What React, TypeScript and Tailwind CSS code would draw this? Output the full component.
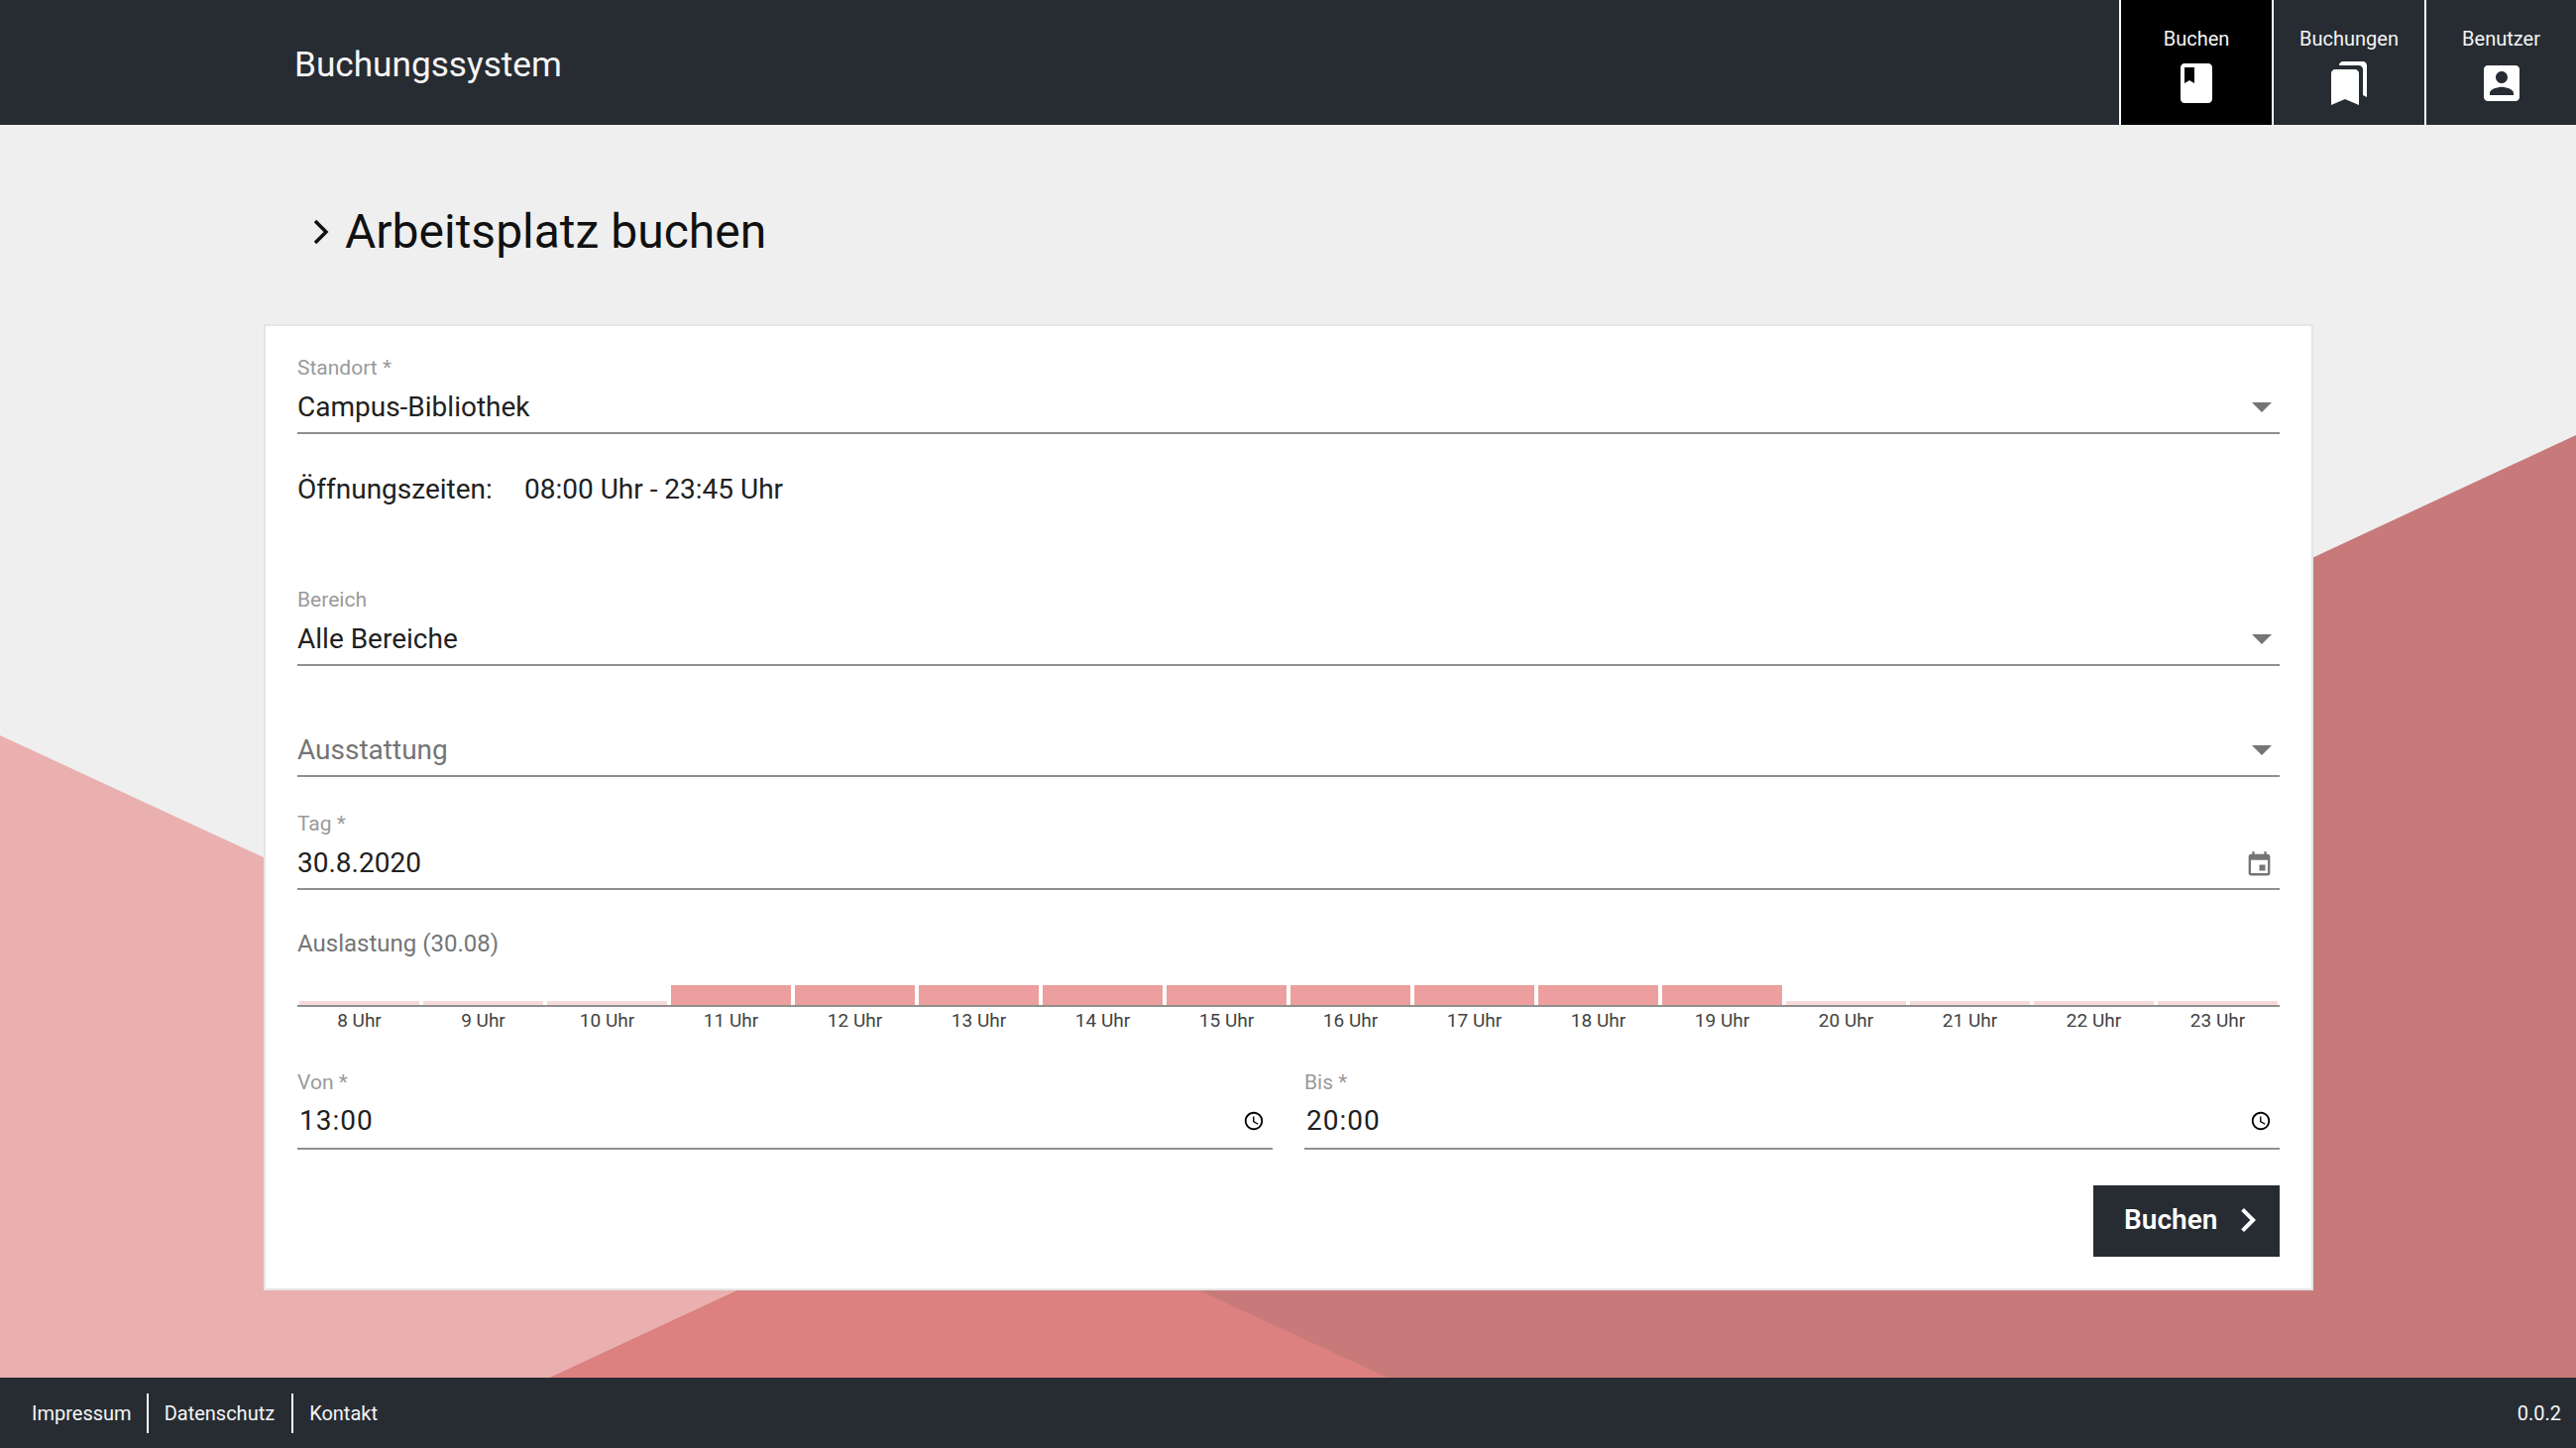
const hours = [8, 9, 10, 11, 12, 13, 14, 15, 16, 17, 18, 19, 20, 21, 22, 23]

function MuiIcon({ d, className }: { d: string; className: string }) {
  return (
    <svg viewBox="0 0 24 24" fill="currentColor" className={className}>
      <path d={d} />
    </svg>
  )
}

const bookIcon = "M18 2H6c-1.1 0-2 .9-2 2v16c0 1.1.9 2 2 2h12c1.1 0 2-.9 2-2V4c0-1.1-.9-2-2-2zM6 4h5v8l-2.5-1.5L6 12V4z"
const bookmarksIcon = "M19 18l2 1V3c0-1.1-.9-2-2-2H8.99C7.89 1 7 1.9 7 3h10c1.1 0 2 .9 2 2v13zM15 5H5c-1.1 0-2 .9-2 2v16l7-3 7 3V7c0-1.1-.9-2-2-2z"
const accountIcon = "M3 5v14c0 1.1.89 2 2 2h14c1.1 0 2-.9 2-2V5c0-1.1-.9-2-2-2H5c-1.11 0-2 .9-2 2zm12 4c0 1.66-1.34 3-3 3s-3-1.34-3-3 1.34-3 3-3 3 1.34 3 3zm-9 8c0-2 4-3.1 6-3.1s6 1.1 6 3.1v1H6v-1z"
const eventIcon = "M17 12h-5v5h5v-5zM16 1v2H8V1H6v2H5c-1.11 0-1.99.9-1.99 2L3 19c0 1.1.89 2 2 2h14c1.1 0 2-.9 2-2V5c0-1.1-.9-2-2-2h-1V1h-2zm3 18H5V8h14v11z"
const clockIcon = "M11.99 2C6.47 2 2 6.48 2 12s4.47 10 9.99 10C17.52 22 22 17.52 22 12S17.52 2 11.99 2zM12 20c-4.42 0-8-3.58-8-8s3.58-8 8-8 8 3.58 8 8-3.58 8-8 8zm.5-13H11v6l5.25 3.15.75-1.23-4.5-2.67z"
const nextIcon = "M10 6L8.59 7.41 13.17 12l-4.58 4.59L10 18l6-6z"

function NavItem({ label, icon, width, active }: { label: string; icon: string; width: string; active?: boolean }) {
  return (
    <div className={`${active ? 'bg-black' : ''} ${width} h-full border-l-2 border-white box-content flex flex-col items-center text-[#f5f5f5]`}>
      <span className="mt-[25px] h-[28px] leading-[28px] text-[20px]">{label}</span>
      <MuiIcon d={icon} className="w-[48px] h-[48px] mt-[7px] text-white" />
    </div>
  )
}

function Arrow() {
  return (
    <svg viewBox="0 0 20 10" className="w-[20px] h-[10px] fill-[#757575]">
      <path d="M0 0h20L10 10z" />
    </svg>
  )
}

function Label({ text }: { text: string }) {
  return <div className="h-[24px] leading-[26px] text-[21px] text-[#9a9a9a]">{text}</div>
}

function Underlined({ value, muted, time, h = 'h-[54px]', children }: { value: string; muted?: boolean; time?: boolean; h?: string; children: React.ReactNode }) {
  return (
    <div className={`${h} box-content border-b-2 border-[#8f8f8f] flex items-center justify-between`}>
      <span className={`${muted ? 'text-[#757575]' : 'text-[#212121]'} ${time ? 'pl-[2px] tracking-[1px]' : 'pt-[3px]'} text-[28px] leading-[36px]`}>{value}</span>
      {children}
    </div>
  )
}

function SelectArrow() {
  return (
    <div className="pr-[8px] pt-[4px]">
      <Arrow />
    </div>
  )
}

function TimeField({ label, value }: { label: string; value: string }) {
  return (
    <div>
      <Label text={label} />
      <Underlined value={value} h="h-[55px]" time>
        <MuiIcon d={clockIcon} className="w-[22px] h-[22px] mr-[8px] text-black" />
      </Underlined>
    </div>
  )
}

export default function App() {
  return (
    <div className="h-screen flex flex-col bg-[#efefef] overflow-hidden font-['Roboto',sans-serif]">
      <header className="h-[126px] shrink-0 bg-[#272c33] flex items-center justify-between">
        <span className="pl-[297px] pt-[5px] text-[35.2px] text-[#f5f5f5]">Buchungssystem</span>
        <nav className="flex h-full">
          <NavItem label="Buchen" icon={bookIcon} width="w-[152px]" active />
          <NavItem label="Buchungen" icon={bookmarksIcon} width="w-[152px]" />
          <NavItem label="Benutzer" icon={accountIcon} width="w-[151px]" />
        </nav>
      </header>

      <main className="relative flex-1">
        <svg viewBox="0 0 2599 1264" preserveAspectRatio="none" className="absolute inset-0 w-full h-full">
          <polygon points="0,616 0,1264 1400,1264" fill="#e9b0af" />
          <polygon points="2599,313 2599,1264 555,1264" fill="#c87a7a" />
          <polygon points="976,1068 555,1264 1400,1264" fill="#dc8180" />
        </svg>

        <div className="relative">
          <div className="h-[56px] mt-[80px] mb-[65px] pl-[316px] flex items-center">
            <svg viewBox="0 0 16 26" className="w-[16px] h-[26px] fill-none stroke-[#111] stroke-[3.5]">
              <path d="M2 2 L13 13 L2 24" />
            </svg>
            <h1 className="ml-[16px] text-[48px] text-[#111]">Arbeitsplatz buchen</h1>
          </div>

          <div className="ml-[266px] w-[2068px] bg-white border-2 border-[#e5e5e5] px-[32px] pt-[29px] pb-[32px]">
            <Label text="Standort *" />
            <Underlined value="Campus-Bibliothek">
              <SelectArrow />
            </Underlined>

            <div className="mt-[34px] pt-[2px] h-[40px] box-content -mb-[2px] flex items-center text-[28px] text-[#212121]">
              <span className="w-[229px]">Öffnungszeiten:</span>
              <span>08:00 Uhr - 23:45 Uhr</span>
            </div>

            <div className="mt-[80px]">
              <Label text="Bereich" />
              <Underlined value="Alle Bereiche">
                <SelectArrow />
              </Underlined>
            </div>

            <div className="mt-[56px]">
              <Underlined value="Ausstattung" muted>
                <SelectArrow />
              </Underlined>
            </div>

            <div className="mt-[34px]">
              <Label text="Tag *" />
              <Underlined value="30.8.2020">
                <MuiIcon d={eventIcon} className="w-[29px] h-[29px] mr-[6px] mt-[6px] text-[#757575]" />
              </Underlined>
            </div>

            <div className="mt-[37px] h-[32px] leading-[34px] text-[24px] text-[#757575]">Auslastung (30.08)</div>

            <div className="mt-[27px] grid grid-cols-16 h-[20px] items-end border-b-2 border-[#8f8f8f] box-content">
              {hours.map((hour) => (
                <div key={hour} className="px-[2px]">
                  <div className={hour >= 11 && hour <= 19 ? 'h-[20px] bg-[#ec9f9e]' : 'h-[4px] bg-[#f6dad9]'} />
                </div>
              ))}
            </div>
            <div className="grid grid-cols-16 h-[26px]">
              {hours.map((hour) => (
                <div key={hour} className="text-center leading-[27px] text-[19px] text-[#424242]">{hour} Uhr</div>
              ))}
            </div>

            <div className="mt-[37px] grid grid-cols-[984px_984px] gap-x-[32px]">
              <TimeField label="Von *" value="13:00" />
              <TimeField label="Bis *" value="20:00" />
            </div>

            <div className="mt-[36px] flex justify-end">
              <button className="w-[188px] h-[72px] bg-[#272c33] text-white flex items-center pl-[31px] pb-[2px]">
                <span className="text-[28px] font-semibold">Buchen</span>
                <MuiIcon d={nextIcon} className="w-[48px] h-[48px] ml-[7px] text-white" />
              </button>
            </div>
          </div>
        </div>
      </main>

      <footer className="h-[71px] shrink-0 bg-[#272c33] flex items-center justify-between pl-[16px] pr-[15px] text-[20px] text-[#f5f5f5]">
        <div className="flex items-center h-[40px]">
          <span className="pl-[16px] pr-[15px]">Impressum</span>
          <span className="pl-[16px] pr-[17px] h-full flex items-center border-l-2 border-white">Datenschutz</span>
          <span className="pl-[16px] pr-[16px] h-full flex items-center border-l-2 border-white">Kontakt</span>
        </div>
        <span>0.0.2</span>
      </footer>
    </div>
  )
}
